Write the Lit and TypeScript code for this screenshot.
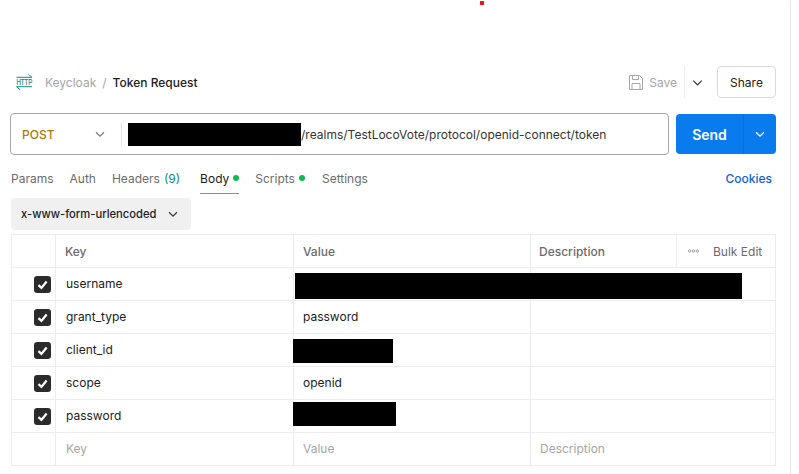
import { LitElement, html, css, svg } from "lit";
import { customElement } from "lit/decorators.js";

const chevron = (size: number, color: string) => html`<svg width=${size} height=${size} viewBox="0 0 16 16" fill="none" stroke=${color} stroke-width="1.3"><path d="M3.5 6 8 10.5 12.5 6" /></svg>`;
const check = svg`<path d="M4.2 8.6 7 11.2 11.9 5.2" fill="none" stroke="#fff" stroke-width="2.1"/>`;

const rows = [
  { key: "username", value: "", mask: "m-user" },
  { key: "grant_type", value: "password", mask: "" },
  { key: "client_id", value: "", mask: "m-client" },
  { key: "scope", value: "openid", mask: "" },
  { key: "password", value: "", mask: "m-pass" },
];

@customElement("app-root")
export class AppRoot extends LitElement {
  static styles = css`
    :host { display: block; width: 799px; height: 474px; background: #fff; font-family: Inter, "Noto Sans", sans-serif; font-size: 12px; color: #212121; overflow: hidden; }
    .page { width: 791px; height: 474px; box-sizing: border-box; border-right: 1px solid #e6e6e6; padding-right: 14px; }
    .tick { width: 4px; height: 4px; background: #e8171c; margin: 1px 0 0 480px; }
    .head { display: flex; align-items: center; height: 32px; margin-top: 61px; padding-left: 16px; }
    .http { font-family: "Liberation Sans", sans-serif; font-size: 9px; fill: #0f8a8a; stroke: #0f8a8a; stroke-width: .2; }
    .crumb { color: #a6a6a6; margin-left: 12px; }
    .sep { color: #a6a6a6; margin: 0 6px; }
    .title { font-weight: 500; color: #212121; }
    .spacer { flex: 1; }
    .save { display: flex; align-items: center; gap: 6px; color: #a6a6a6; height: 32px; padding-right: 7px; border-right: 1px solid #ededed; }
    .more { display: flex; width: 24px; justify-content: center; margin-right: 8px; }
    .share { width: 59px; height: 32px; box-sizing: border-box; border: 1px solid #d9d9d9; border-radius: 4px; display: flex; align-items: center; justify-content: center; }
    .url { display: flex; align-items: center; gap: 7px; margin: 15px 0 0 10px; }
    .input { width: 659px; height: 42px; box-sizing: border-box; border: 1px solid #a6a6a6; border-radius: 4px; display: flex; align-items: center; color: #333; }
    .method { width: 110px; padding-left: 11px; box-sizing: border-box; display: flex; justify-content: space-between; align-items: center; padding-right: 14px; color: #ad7a03; font-weight: 500; }
    .vline { width: 1px; height: 24px; background: #e6e6e6; margin-right: 6px; }
    .mask-url { width: 173px; height: 23px; background: #000; }
    .send { width: 100px; height: 40px; background: #097bed; border-radius: 4px; display: flex; color: #fff; }
    .send b { flex: 1; display: flex; align-items: center; justify-content: center; font-size: 14px; font-weight: 600; border-right: 1px solid #0a6dd1; }
    .send span { width: 32px; display: flex; align-items: center; justify-content: center; }
    .tabs { display: flex; align-items: stretch; height: 32px; margin: 7px 0 0 11px; color: #6b6b6b; gap: 16px; }
    .tab { display: flex; align-items: center; gap: 4px; height: 31px; padding-top: 1px; box-sizing: border-box; }
    .count { color: #0f8a8a; }
    .active { color: #212121; box-shadow: 0 1px 0 #f26b3a; margin-left: 4px; }
    .scripts { margin-right: 1px; }
    .tabs .dot { width: 6px; height: 6px; border-radius: 50%; background: #0cbb52; }
    .cookies { margin-left: auto; margin-right: 4px; color: #0f62d6; font-weight: 500; }
    .mode { width: 180px; height: 32px; margin: 4px 0 0 11px; background: #f0f0f0; border-radius: 4px; display: flex; align-items: center; justify-content: space-between; padding: 0 11px 0 10px; box-sizing: border-box; font-size: 11.2px; font-weight: 500; }
    .table { margin: 4px 0 0 11px; width: 765px; box-sizing: border-box; border: 1px solid #ededed; border-bottom: 0; }
    .row { position: relative; display: grid; grid-template-columns: 44px 238px 237px 146px 1fr; height: 33px; box-sizing: border-box; border-bottom: 1px solid #ededed; }
    .row > .cell { display: flex; align-items: center; padding-left: 10px; padding-bottom: 1px; border-right: 1px solid #ededed; }
    .row > .cell.span { grid-column: span 2; border-right: 0; padding-left: 9px; }
    .row > .cb { padding-left: 22px; padding-bottom: 0; }
    .hd { color: #6b6b6b; font-weight: 500; }
    .row.hd > .cell { padding-left: 9px; padding-bottom: 0; }
    .row.hd > .desc { padding-left: 8px; }
    .row.hd > .bulk { font-weight: 400; gap: 14px; padding-left: 11px; border-right: 0; }
    .ph { color: #a6a6a6; }
    .row.ph > .cell { padding-bottom: 2px; }
    .row .val { padding-left: 9px; }
    .mask { position: absolute; background: #000; }
    .m-user { left: 283px; top: 5px; width: 447px; height: 26px; }
    .m-client { left: 281px; top: 5px; width: 100px; height: 24px; }
    .m-pass { left: 281px; top: 2px; width: 103px; height: 24px; }
  `;

  render() {
    return html`<div class="page">
      <div class="tick"></div>
      <div class="head">
        <svg width="17" height="16" viewBox="0 0 17 16" fill="none" stroke="#0f8a8a" stroke-width="1"><path d="M.5 3.3H16L12.5 .4M16 12.7H.5L4 15.7" /><text class="http" transform="translate(.4 11.3) scale(.68 1)">HTTP</text></svg>
        <span class="crumb">Keycloak</span><span class="sep">/</span><span class="title">Token Request</span>
        <span class="spacer"></span>
        <div class="save">
          <svg width="14" height="15" viewBox="0 0 14 15" fill="none" stroke="#a6a6a6"><path d="M.5.5H10.5L13.5 3.5V14.5H.5ZM3.5.5V4.5H9.5V.5M3 14.5V8.5H11V14.5" /></svg>
          <span>Save</span>
        </div>
        <span class="more">${chevron(15, "#333")}</span>
        <div class="share">Share</div>
      </div>
      <div class="url">
        <div class="input">
          <div class="method"><span>POST</span>${chevron(14, "#777")}</div>
          <div class="vline"></div>
          <div class="mask-url"></div>
          <span>/realms/TestLocoVote/protocol/openid-connect/token</span>
        </div>
        <div class="send"><b>Send</b><span>${chevron(14, "#fff")}</span></div>
      </div>
      <div class="tabs">
        <div class="tab">Params</div>
        <div class="tab">Auth</div>
        <div class="tab">Headers<span class="count">(9)</span></div>
        <div class="tab active">Body<span class="dot"></span></div>
        <div class="tab scripts">Scripts<span class="dot"></span></div>
        <div class="tab">Settings</div>
        <div class="tab cookies">Cookies</div>
      </div>
      <div class="mode"><span>x-www-form-urlencoded</span>${chevron(14, "#333")}</div>
      <div class="table">
        <div class="row hd">
          <div class="cell"></div><div class="cell">Key</div><div class="cell">Value</div><div class="cell desc">Description</div>
          <div class="cell bulk">
            <svg width="11" height="4" viewBox="0 0 11 4" fill="none" stroke="#8a8a8a" stroke-width=".8"><circle cx="1.7" cy="2" r="1.2"/><circle cx="5.5" cy="2" r="1.2"/><circle cx="9.3" cy="2" r="1.2"/></svg>
            <span>Bulk Edit</span>
          </div>
        </div>
        ${rows.map((r) => html`<div class="row">
          <div class="cell cb"><svg width="17" height="17" viewBox="0 0 16 16"><rect width="16" height="16" rx="3" fill="#2b2b2b"/>${check}</svg></div>
          <div class="cell">${r.key}</div>
          <div class="cell val">${r.value}</div><div class="cell span"></div>
          ${r.mask ? html`<div class="mask ${r.mask}"></div>` : ""}
        </div>`)}
        <div class="row ph"><div class="cell"></div><div class="cell">Key</div><div class="cell val">Value</div><div class="cell span">Description</div></div>
      </div>
    </div>`;
  }
}
